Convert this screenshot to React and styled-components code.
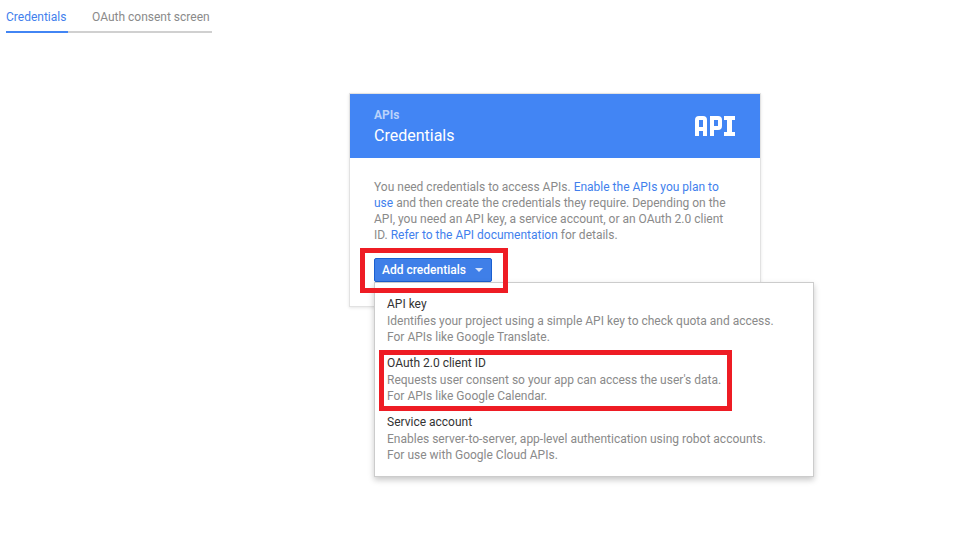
import React from "react";
import styled, { createGlobalStyle } from "styled-components";

const GlobalStyle = createGlobalStyle`
  *, *::before, *::after { box-sizing: border-box; }
  body {
    margin: 0;
    background: #fff;
    color: #8a8a8a;
    font-family: Roboto, "Liberation Sans", sans-serif;
    font-size: 12px;
    line-height: 16px;
  }
`;

const Page = styled.div`
  min-height: 100vh;
`;

const Tabs = styled.nav`
  display: flex;
  gap: 24px;
  width: fit-content;
  margin-left: 6px;
  padding-top: 9px;
  box-shadow: inset 0 -2px #d0d0d0;
`;

const Tab = styled.a`
  height: 24px;
  min-width: ${(p) => p.$minWidth};
  color: ${(p) => (p.$active ? "#427fed" : "#8a8a8a")};
  border-bottom: 2px solid ${(p) => (p.$active ? "#4285f4" : "transparent")};
  text-decoration: none;
`;

const Main = styled.main`
  display: flex;
  justify-content: center;
  padding: 60px 0 80px 149px;
`;

const Card = styled.section`
  width: 100%;
  max-width: 412px;
  border: 1px solid #e2e2e2;
  box-shadow: 0 1px 3px rgba(0, 0, 0, 0.1);
`;

const CardHeader = styled.header`
  display: flex;
  align-items: center;
  justify-content: space-between;
  height: 64px;
  padding: 0 24px;
  background: #4285f4;
`;

const Eyebrow = styled.div`
  color: #b9d2fb;
  font-weight: 700;
  line-height: 20px;
`;

const Title = styled.h1`
  margin: 0;
  color: #fff;
  font-size: 16px;
  font-weight: 400;
  line-height: 22px;
`;

const CardBody = styled.div`
  padding: 21px 24px 24px;
`;

const Intro = styled.p`
  margin: 0 0 15px;
`;

const Link = styled.a`
  color: #427fed;
  text-decoration: none;
`;

const Dropdown = styled.div`
  position: relative;
  width: fit-content;
`;

const MenuButton = styled.button`
  display: flex;
  align-items: center;
  justify-content: space-between;
  width: 118px;
  height: 24px;
  padding: 0 8px 0 7px;
  border: 1px solid #1a5fd0;
  border-radius: 2px;
  background: #3f7fe8;
  color: #fff;
  font: 500 12px/16px Roboto, "Liberation Sans", sans-serif;
  white-space: nowrap;
`;

const Caret = styled.span`
  border: 4px solid transparent;
  border-top-color: #d5e3fb;
  border-bottom: 0;
`;

const Menu = styled.ul`
  position: absolute;
  top: 100%;
  left: 0;
  display: flex;
  flex-direction: column;
  gap: 9px;
  width: 440px;
  margin: 0;
  padding: 12px 12px 13px;
  border: 1px solid #ccc;
  background: #fff;
  box-shadow: 0 3px 6px rgba(0, 0, 0, 0.22);
  list-style: none;
`;

const MenuItem = styled.li`
  position: relative;
  width: fit-content;
`;

const ItemName = styled.div`
  color: #333;
  line-height: 18px;
`;

const Highlight = styled.span`
  position: absolute;
  inset: ${(p) => p.$inset};
  border: 5px solid #ee1c24;
  pointer-events: none;
`;

const ApiLogo = () => (
  <svg width="41" height="20" viewBox="0 0 41 20" fill="#fff" fillRule="evenodd" role="img" aria-label="API">
    <path d="M0 20V4Q0 0 4 0H8Q12 0 12 4V20H8V15H4V20ZM4 4V11H8V4Z" />
    <path d="M15 20V0H23Q27 0 27 4V10Q27 14 23 14H19V20ZM19 4V10H23V4Z" />
    <path d="M29 0H40V4H37V16H40V20H29V16H32V4H29Z" />
  </svg>
);

const options = [
  {
    name: "API key",
    lines: ["Identifies your project using a simple API key to check quota and access.", "For APIs like Google Translate."],
  },
  {
    name: "OAuth 2.0 client ID",
    lines: ["Requests user consent so your app can access the user's data.", "For APIs like Google Calendar."],
    highlighted: true,
  },
  {
    name: "Service account",
    lines: ["Enables server-to-server, app-level authentication using robot accounts.", "For use with Google Cloud APIs."],
  },
];

export default function App() {
  return (
    <Page>
      <GlobalStyle />
      <Tabs>
        <Tab href="#credentials" $active $minWidth="62px" aria-current="page">Credentials</Tab>
        <Tab href="#consent" $minWidth="120px">OAuth consent screen</Tab>
      </Tabs>
      <Main>
        <Card>
          <CardHeader>
            <div>
              <Eyebrow>APIs</Eyebrow>
              <Title>Credentials</Title>
            </div>
            <ApiLogo />
          </CardHeader>
          <CardBody>
            <Intro>
              You need credentials to access APIs. <Link href="#enable">Enable the APIs you plan to use</Link> and
              then create the credentials they require. Depending on the API, you need an API key, a service
              account, or an OAuth 2.0 client ID. <Link href="#docs">Refer to the API documentation</Link> for
              details.
            </Intro>
            <Dropdown>
              <MenuButton type="button" aria-haspopup="true" aria-expanded="true">
                Add credentials
                <Caret />
              </MenuButton>
              <Menu>
                {options.map((option) => (
                  <MenuItem key={option.name}>
                    <ItemName>{option.name}</ItemName>
                    {option.lines.map((line) => (
                      <div key={line}>{line}</div>
                    ))}
                    {option.highlighted && <Highlight $inset="-4px -11px -7px -8px" />}
                  </MenuItem>
                ))}
              </Menu>
              <Highlight $inset="-10px -16px -11px -14px" />
            </Dropdown>
          </CardBody>
        </Card>
      </Main>
    </Page>
  );
}
